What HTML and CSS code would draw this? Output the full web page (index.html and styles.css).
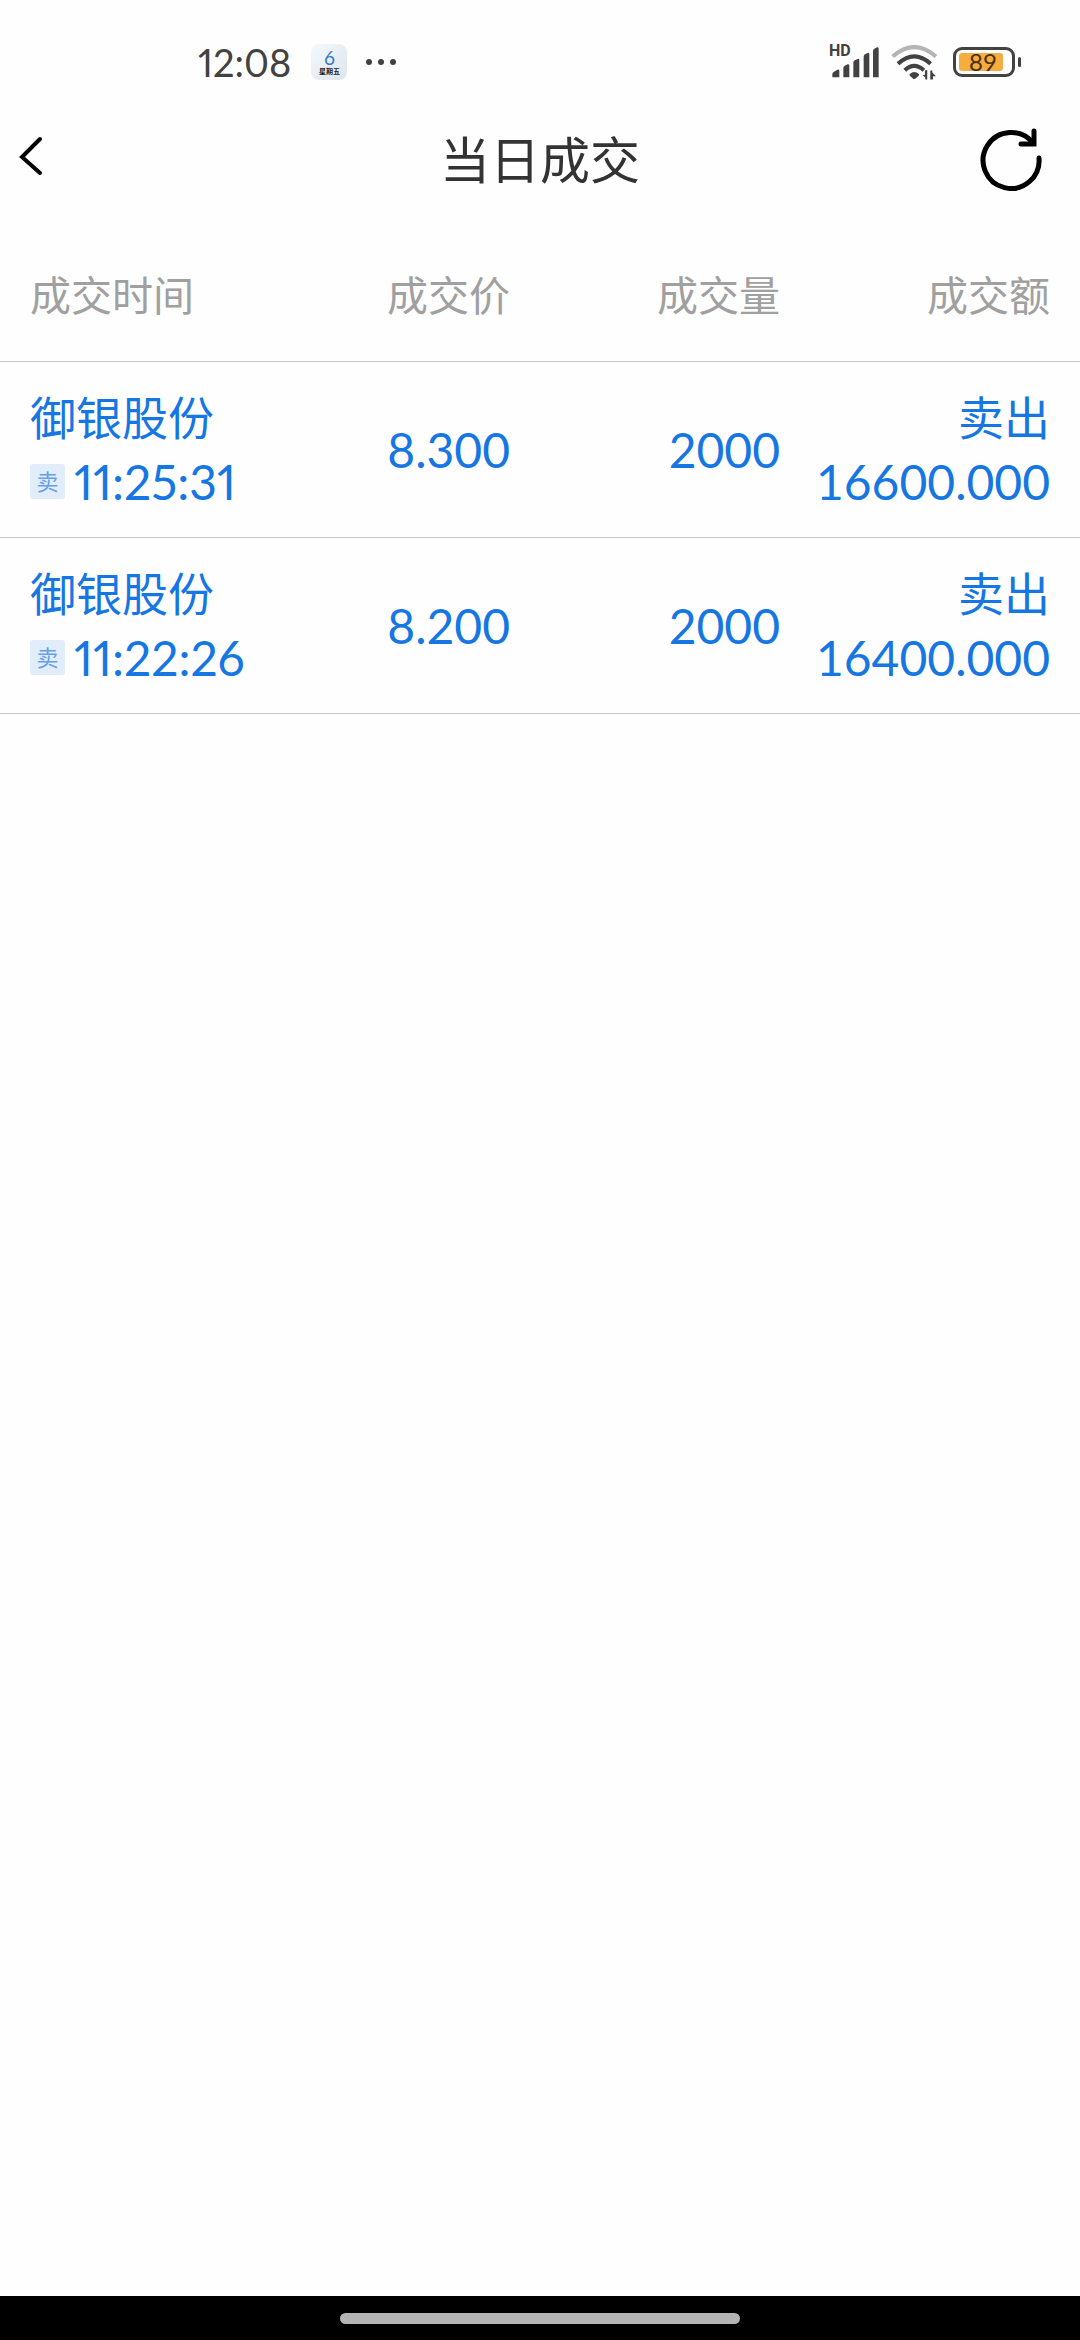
FILE: index.html
```html
<!DOCTYPE html>
<html lang="zh-CN">
<head>
  <meta charset="UTF-8" />
  <meta name="viewport" content="width=device-width, initial-scale=1.0" />
  <title>当日成交</title>
  <link rel="stylesheet" href="styles.css">
</head>
<body>
  <div class="status-bar">
    <div class="status-left">
      <span class="clock">12:08</span>
      <div class="calendar">
        <span class="calendar-day">6</span>
        <span class="calendar-week">星期五</span>
      </div>
      <svg class="more" viewBox="0 0 32 8" width="32" height="8">
        <circle cx="4" cy="4" r="3" /><circle cx="16" cy="4" r="3" /><circle cx="28" cy="4" r="3" />
      </svg>
    </div>
    <div class="status-right">
      <div class="signal">
        <span class="hd">HD</span>
        <svg viewBox="0 0 150 96" width="50" height="32">
          <path d="M10 94V84Q10 79 15 77L25 71Q31 69 31 75V94Z" />
          <path d="M43 94V66Q43 61 47 59L56 55Q61 53 61 59V94Z" />
          <path d="M73 94V50Q73 45 77 43L86 39Q91 37 91 43V94Z" />
          <path d="M104 94V32Q104 27 108 25L116 21Q121 19 121 25V94Z" />
          <path d="M132 94V15Q132 10 136 8L144 4Q149 2 149 8V94Z" />
        </svg>
      </div>
      <svg class="wifi" viewBox="0 0 140 104" width="47" height="35">
        <path class="wifi-dim" d="M5 34Q69-22 134 34" />
        <path class="wifi-arc" d="M21 56Q69 12 118 56" />
        <path class="wifi-arc" d="M41 75Q69 49 98 75" />
        <path d="M56 86Q69 74 83 86Q85 89 82 92L73 100Q69 103 65 100L57 92Q53 89 56 86Z" />
        <path d="M108 75V103H102V97L94 89H101V75ZM117 103V76H123V82L134 93H125V103Z" />
      </svg>
      <div class="battery">
        <span class="battery-level">89</span>
      </div>
    </div>
  </div>

  <header class="title-bar">
    <button class="icon-btn back" type="button" aria-label="返回">
      <svg viewBox="0 0 24 40" width="24" height="40">
        <path d="M21 3L3 21L21 37" />
      </svg>
    </button>
    <h1>当日成交</h1>
    <button class="icon-btn refresh" type="button" aria-label="刷新">
      <svg viewBox="0 0 64 64" width="64" height="64">
        <path d="M60 31A28 28 0 1 1 54 16" />
        <path d="M55 4V17H42" />
      </svg>
    </button>
  </header>

  <main>
    <table class="deals">
      <thead>
        <tr>
          <th>成交时间</th>
          <th>成交价</th>
          <th>成交量</th>
          <th>成交额</th>
        </tr>
      </thead>
      <tbody>
        <tr>
          <td>
            <div class="name">御银股份</div>
            <div class="time"><span class="tag">卖</span>11:25:31</div>
          </td>
          <td>8.300</td>
          <td>2000</td>
          <td>
            <div class="name">卖出</div>
            <div>16600.000</div>
          </td>
        </tr>
        <tr>
          <td>
            <div class="name">御银股份</div>
            <div class="time"><span class="tag">卖</span>11:22:26</div>
          </td>
          <td>8.200</td>
          <td>2000</td>
          <td>
            <div class="name">卖出</div>
            <div>16400.000</div>
          </td>
        </tr>
      </tbody>
    </table>
  </main>

  <footer class="nav-bar">
    <div class="nav-pill"></div>
  </footer>
</body>
</html>
```

FILE: styles.css
```css
* {
  box-sizing: border-box;
}

body {
  margin: 0;
  min-height: 100vh;
  display: flex;
  flex-direction: column;
  background: #fefefe;
  color: #333;
  font-family: Lato, "Noto Sans CJK SC", sans-serif;
}

/* status bar */
.status-bar {
  height: 88px;
  padding: 36px 58px 0 198px;
  display: flex;
  justify-content: space-between;
}

.status-left,
.status-right {
  height: 52px;
  display: flex;
  align-items: center;
}

.status-left svg,
.status-right svg {
  display: block;
  fill: #424242;
}

.clock {
  color: #424242;
  font-size: 38px;
  font-variant-numeric: proportional-nums;
  line-height: 52px;
}

.calendar {
  width: 36px;
  height: 36px;
  margin: 0 18px 0 20px;
  padding-top: 5px;
  border-radius: 8px;
  background: linear-gradient(135deg, #f5f9fc, #dce5ec);
  text-align: center;
}

.calendar span {
  display: block;
}

.calendar-day {
  color: #3579d0;
  font-size: 19px;
  line-height: 18px;
}

.calendar-week {
  color: #222;
  font-size: 7px;
  font-weight: 700;
  line-height: 8px;
}

.signal {
  position: relative;
}

.hd {
  position: absolute;
  top: -3px;
  left: 0;
  color: #424242;
  font-family: Roboto, sans-serif;
  font-size: 16px;
  font-weight: 700;
  line-height: 16px;
}

.wifi {
  margin: 0 15px 0 12px;
}

.wifi-dim,
.wifi-arc {
  fill: none;
  stroke: #424242;
  stroke-width: 12;
}

.wifi-dim {
  stroke: #b5b5b5;
}

.battery {
  position: relative;
  width: 62px;
  height: 30px;
  margin-right: 7px;
  padding: 3px;
  border: 3px solid #424242;
  border-radius: 9px;
}

.battery::after {
  content: "";
  position: absolute;
  top: 7px;
  right: -9px;
  width: 3px;
  height: 10px;
  border-radius: 2px;
  background: #424242;
}

.battery-level {
  display: block;
  width: 44px;
  height: 18px;
  padding-left: 4px;
  border-radius: 3px;
  background: #f5ad3d;
  color: #4a300c;
  font-size: 24px;
  line-height: 18px;
  text-align: center;
}

/* title bar */
.title-bar {
  height: 142px;
  padding: 0 37px 0 19px;
  display: grid;
  grid-template-columns: 1fr auto 1fr;
  align-items: center;
}

.title-bar h1 {
  margin: 0;
  padding: 2px 0 0 18px;
  font-size: 50px;
  font-weight: 400;
  line-height: 64px;
}

.icon-btn {
  justify-self: start;
  padding: 0;
  border: 0;
  background: none;
}

.icon-btn svg {
  display: block;
  fill: none;
  stroke: #000;
  stroke-width: 4;
  stroke-linecap: round;
}

.back {
  padding-bottom: 6px;
}

.refresh {
  justify-self: end;
}

.refresh svg {
  stroke-width: 5;
}

/* deals */
main {
  flex: 1;
}

.deals {
  width: 100%;
  table-layout: fixed;
  border-collapse: separate;
  border-spacing: 0;
}

.deals th,
.deals td {
  padding: 0 30px 0 0;
  border-bottom: 1px solid #c8c8c8;
  text-align: right;
  white-space: nowrap;
}

.deals th:first-child,
.deals td:first-child {
  padding-right: 0;
  padding-left: 30px;
  text-align: left;
}

.deals th {
  height: 132px;
  padding-bottom: 5px;
  color: #a0a0a0;
  font-size: 41px;
  font-weight: 400;
}

.deals td {
  height: 176px;
  color: #1677e3;
  font-size: 48px;
  line-height: 64px;
}

.deals .name {
  font-size: 46px;
}

.time {
  display: flex;
  align-items: center;
  font-variant-numeric: proportional-nums;
}

.tag {
  width: 35px;
  height: 35px;
  margin-right: 9px;
  border-radius: 3px;
  background: #e2edfc;
  color: #659fe8;
  font-size: 22px;
  line-height: 35px;
  text-align: center;
}

/* gesture bar */
.nav-bar {
  height: 44px;
  display: flex;
  align-items: center;
  justify-content: center;
  background: #000;
}

.nav-pill {
  width: 37%;
  height: 11px;
  border-radius: 6px;
  background: #b3b3b3;
}
```
